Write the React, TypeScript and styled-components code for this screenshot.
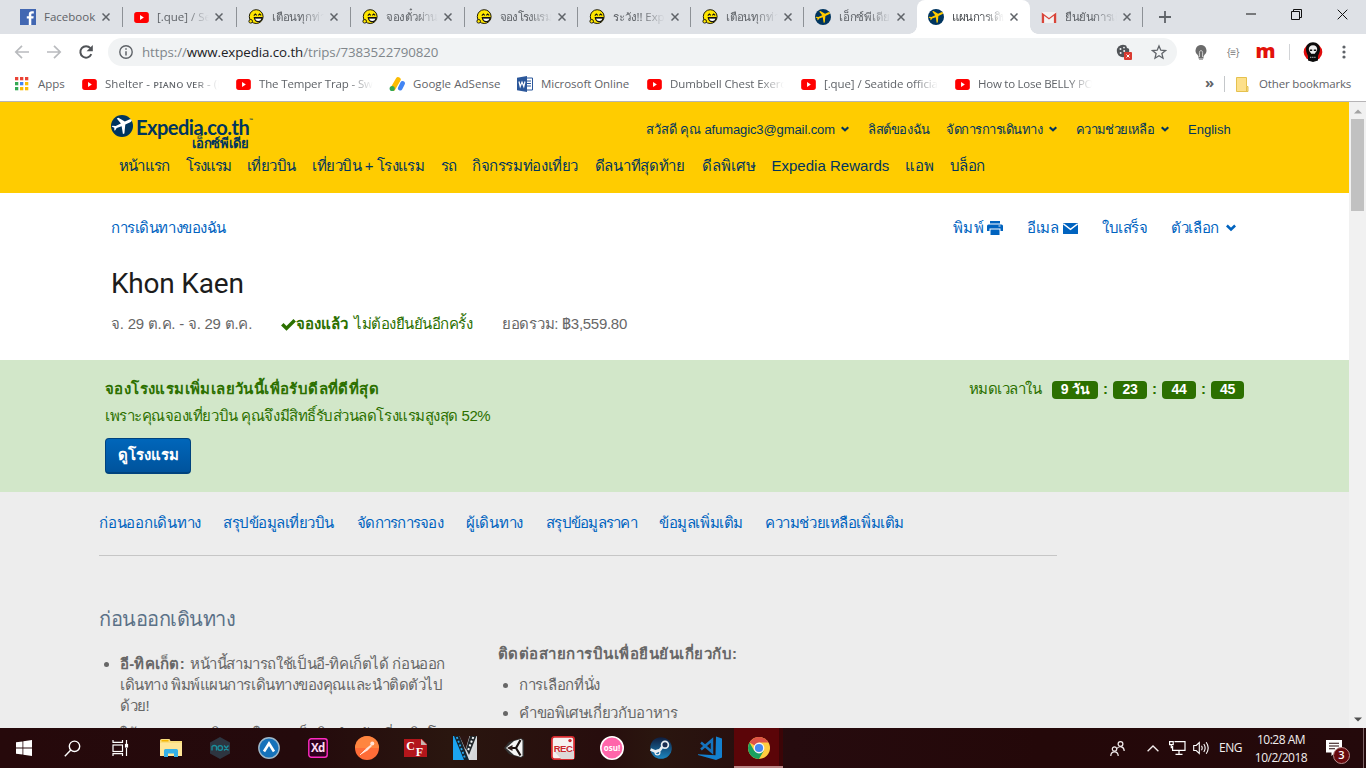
import React from "react";
import styled, { createGlobalStyle, css } from "styled-components";

const ui = `"Open Sans", "Noto Sans", sans-serif`;
const site = `"Liberation Sans", Arial, sans-serif`;

const GlobalStyle = createGlobalStyle`
  * { box-sizing: border-box; }
  body { margin: 0; background: #fff; font-family: ${site}; overflow: hidden; }
  ul { margin: 0; padding: 0; list-style: none; }
  h1, h2, h3, p { margin: 0; font-weight: 400; }
  svg { display: block; flex: none; }
`;

const Screen = styled.div`
  width: 1366px; height: 768px; display: flex; flex-direction: column; overflow: hidden; background: #fff;
`;

/* ---------- browser chrome ---------- */
const TabStrip = styled.div`
  height: 34px; flex: none; display: flex; padding-left: 9px; background: #dee1e6; font: 11.5px/34px ${ui}; color: #5f6368;
`;
const TabItem = styled.div<{ $w: number; $active?: boolean; $sep?: boolean }>`
  position: relative; width: ${p => p.$w}px; flex: none; height: 34px; display: flex; align-items: center; padding-left: 11px;
  ${p => p.$sep && css`&::before { content: ""; position: absolute; right: 0; top: 7px; width: 1px; height: 20px; background: #8d9196; }`}
  ${p => p.$active && css`
    background: #fff; border-radius: 8px 8px 0 0; color: #45494d;
    &::before, &::after { content: ""; position: absolute; bottom: 0; width: 8px; height: 8px; }
    &::before { left: -8px; background: radial-gradient(circle at 0 0, transparent 7.5px, #fff 8px); }
    &::after { right: -8px; background: radial-gradient(circle at 100% 0, transparent 7.5px, #fff 8px); }
  `}
`;
const TabTitle = styled.span<{ $fade?: boolean; $ls?: number }>`
  width: 52px; margin: 0 6px 0 8px; height: 34px; white-space: nowrap; overflow: hidden; letter-spacing: ${p => p.$ls || 0}px;
  ${p => p.$fade && css`mask-image: linear-gradient(90deg, #000 55%, transparent 100%);`}
`;
const NewTab = styled.div`width: 44px; display: flex; align-items: center; justify-content: center;`;
const WindowControls = styled.div`
  margin-left: auto; height: 28px; display: flex; align-items: center; gap: 35px; padding-right: 18px;
`;
const Toolbar = styled.div`
  height: 36px; flex: none; display: flex; align-items: center; padding-left: 14px; background: #fff;
`;
const NavButtons = styled.div`width: 94px; flex: none; display: flex; gap: 16px;`;
const Omnibox = styled.div`
  width: 1069px; flex: none; height: 28px; border-radius: 14px; background: #f1f3f4; display: flex; align-items: center; padding: 0 10px 0 11px;
`;
const Url = styled.span`
  margin-left: 9px; flex: 1; font: 13.3px/28px ${ui}; letter-spacing: -0.07px; color: #80868b; white-space: nowrap;
  b { font-weight: 400; color: #202124; }
`;
const OmniIcons = styled.div`display: flex; gap: 19px; align-items: center;`;
const Extensions = styled.div`flex: 1; display: flex; align-items: center; padding-left: 16px;`;
const Slot = styled.div<{ $w: number }>`width: ${p => p.$w}px; flex: none; display: flex; align-items: center; justify-content: center;`;
const Braces = styled.span`font: 10px/12px ${ui}; color: #777; letter-spacing: -0.5px;`;
const ExtM = styled.span`font: 800 20px/20px "Open Sans", sans-serif; color: #e3120b; height: 22px;`;
const VRule = styled.i<{ $h: number; $c: string }>`width: 1px; height: ${p => p.$h}px; background: ${p => p.$c};`;

const BookmarkBar = styled.div`
  height: 31px; flex: none; display: flex; align-items: center; padding: 0 0 3px 15px; background: #fff; font: 11.5px/28px ${ui}; color: #5f6368;
`;
const Bookmark = styled.div<{ $w: number }>`width: ${p => p.$w}px; flex: none; display: flex; align-items: center;`;
const BookmarkText = styled.span<{ $ml: number; $ls?: number; $fade?: boolean }>`
  margin-left: ${p => p.$ml}px; height: 28px; white-space: nowrap; letter-spacing: ${p => p.$ls || 0}px;
  ${p => p.$fade && css`width: 114px; overflow: hidden; mask-image: linear-gradient(90deg, #000 78%, transparent 100%);`}
`;
const More = styled.span`width: 13px; margin-left: auto; font: 700 15px/24px ${ui}; height: 28px;`;

/* ---------- page ---------- */
const Viewport = styled.div`height: 627px; flex: none; display: flex; border-top: 1px solid #b6b4b6;`;
const Page = styled.div`width: 1349px; height: 626px; display: flex; flex-direction: column; overflow: hidden; background: #ededed;`;
const Scrollbar = styled.div`
  width: 17px; height: 626px; background: #f1f1f1; display: flex; flex-direction: column; align-items: center; justify-content: space-between; padding: 7px 0 6px;
`;
const Thumb = styled.div`width: 13px; height: 92px; background: #c1c1c1; margin: 5px 0 auto;`;

const Txt = styled.span<{ $w?: number; $ls?: number }>`
  ${p => p.$w && css`width: ${p.$w}px;`} flex: none; white-space: nowrap; letter-spacing: ${p => p.$ls || 0}px;
`;

const SiteHeader = styled.header`height: 91px; flex: none; background: #fc0; color: #00355f; padding-left: 111px;`;
const HeaderTop = styled.div`height: 46px; display: flex;`;
const Logo = styled.div`width: 535px; display: flex; padding-top: 13px; height: 50px;`;
const LogoWords = styled.div`margin-left: 3px; width: 115px;`;
const LogoName = styled.div`
  font: 700 20px/24px "Lato", sans-serif; letter-spacing: -0.5px; white-space: nowrap; height: 20px; display: flex;
  sup { font-size: 5px; line-height: 10px; }
`;
const LogoThai = styled.div`font: 700 13px/16px ${site}; text-align: right; letter-spacing: -0.1px; padding-right: 2px; margin-top: 1px;`;
const Utility = styled.nav`display: flex; height: 30px; margin-top: 12px; font-size: 13px; line-height: 31px;`;
const UtilityItem = styled.div<{ $w: number }>`width: ${p => p.$w}px; display: flex; align-items: center; gap: 6px;`;
const MainNav = styled.nav`display: flex; padding-left: 8px; gap: 16.8px; font-size: 15px; line-height: 36px;`;

const TripHead = styled.section`height: 167px; flex: none; background: #fff; padding: 20px 0 0 111px;`;
const TripTools = styled.div`height: 30px; display: flex; align-items: center; color: #0063bf; font-size: 15px; line-height: 30px;`;
const ToolGroup = styled.div<{ $w: number }>`width: ${p => p.$w}px; display: flex; align-items: center;`;
const Title = styled.h1`margin-top: 23px; font: 400 28px/36px "Roboto", sans-serif; letter-spacing: -0.2px; color: #1c1c1c; height: 36px;`;
const Summary = styled.div`height: 30px; margin-top: 7px; display: flex; align-items: center; font-size: 15px; line-height: 30px; color: #676767;`;
const Confirmed = styled.div`display: flex; align-items: center; color: #2c7000; width: 221px; b { margin-right: 6px; width: 52px; }`;

const Deal = styled.section`height: 132px; flex: none; background: #d2e7c9; padding: 15px 105px 0; color: #2c7000; display: flex; justify-content: space-between; font-size: 15px; line-height: 27px;`;
const DealCopy = styled.div`display: flex; flex-direction: column; align-items: flex-start;`;
const DealTitle = styled.h3`font-size: 15px; font-weight: 700; letter-spacing: 0.4px; white-space: nowrap;`;
const DealButton = styled.button`
  margin: 9px 0 0; width: 86px; height: 36px; padding: 0 0 2px; border: 1px solid #00437e; border-bottom-width: 2px; border-radius: 4px;
  background: linear-gradient(#0066ba, #00539c); color: #fff; font: 700 15px/30px ${site}; white-space: nowrap;
`;
const Countdown = styled.div`display: flex; height: 26px; align-items: center; color: #2c7000;`;
const Digits = styled.span<{ $w: number }>`
  width: ${p => p.$w}px; height: 18px; margin-top: 4px; border-radius: 4px; background: #2c7000; color: #fff; font: 700 14px/17px ${site}; text-align: center; letter-spacing: -0.3px;
`;
const Colon = styled.b`width: 15px; text-align: center;`;

const Details = styled.section`flex: 1; padding-left: 99px; color: #676767; font-size: 15px;`;
const SectionTabs = styled.nav`width: 958px; height: 64px; display: flex; gap: 22px; padding-top: 16px; border-bottom: 1px solid #c6c6c6; color: #0063bf; line-height: 30px;`;
const SectionTitle = styled.h2`margin-top: 48px; font-size: 20px; line-height: 30px; height: 30px; letter-spacing: -0.5px; color: #5b7187;`;
const Columns = styled.div`display: flex;`;
const LeftColumn = styled.ul`width: 399px; padding-top: 19px; line-height: 21px;`;
const RightColumn = styled.div`padding-top: 9px; line-height: 21px;`;
const RightTitle = styled.h3`font-size: 15px; font-weight: 700; letter-spacing: 0.48px; white-space: nowrap; margin-bottom: 10px;`;
const Bullet = styled.li`
  display: flex; margin-bottom: 7px;
  &::before { content: ""; width: 5px; height: 5px; border-radius: 50%; background: #676767; margin: 9px 11px 0 5px; flex: none; }
`;
const Lines = styled.div`display: flex; flex-direction: column; white-space: nowrap; b { letter-spacing: 0.25px; margin-right: 5px; }`;

/* ---------- taskbar ---------- */
const TaskbarRoot = styled.footer`
  height: 40px; flex: none; display: flex; align-items: stretch; color: #f2eeee; font: 12px/18px ${ui};
  background: linear-gradient(90deg, #26090b, #240a0c 22%, #2a160f 33%, #270d0d 44%, #2a160f 48%, #260b0e 58%, #240809 76%, #24090b);
`;
const SystemSlots = styled.div`width: 146px; flex: none; display: flex;`;
const AppSlot = styled.div<{ $active?: boolean }>`
  width: 49px; flex: none; display: flex; align-items: center; justify-content: center;
  ${p => p.$active && css`background: linear-gradient(90deg, #5b0508 92%, #3c0507 92%); border-bottom: 2px solid #b98484; padding-top: 2px;`}
`;
const SystemSlot = styled.div`width: 48px; flex: none; display: flex; align-items: center; justify-content: center;`;
const Tray = styled.div`margin-left: auto; display: flex; align-items: center;`;
const Lang = styled.span`width: 34px; letter-spacing: -0.5px;`;
const Clock = styled.div`width: 56px; text-align: center; letter-spacing: -0.5px; line-height: 18px; white-space: nowrap; padding-top: 1px;`;
const Notif = styled.div`position: relative; width: 52px; height: 40px; display: flex; align-items: center; justify-content: center; padding-right: 3px;`;
const Badge = styled.span`
  position: absolute; left: 24px; top: 19px; width: 17px; height: 17px; border: 1px solid #b98e8e; border-radius: 50%; background: #680a0e;
  font: 600 11px/14px ${ui}; text-align: center; color: #fff;
`;

/* ---------- icons ---------- */
const Smiley = () => (
  <svg width="16" height="16" viewBox="0 0 16 16">
    <circle cx="8.200" cy="7.600" r="6.900" fill="#ffe600" stroke="#1d1a05" strokeWidth="1" />
    <path d="M5.800 6.600l1.500-1.500 1.500 1.300M10.300 6.400l1.400-1.300 1.500 1.300" stroke="#111" strokeWidth="1.100" fill="none" />
    <path d="M6.300 8.600h7.900c-.4 2.600-1.900 4-3.900 4S6.700 11.200 6.300 8.600z" fill="#fff" stroke="#111" strokeWidth="1.100" />
    <path d="M6.500 9h7.600" stroke="#111" />
    <circle cx="2.700" cy="12.300" r="1.800" fill="#ffe600" stroke="#111" strokeWidth=".9" />
  </svg>
);
const PlaneDisc = ({ size, disc, plane }: { size: number; disc: string; plane: string }) => (
  <svg width={size} height={size} viewBox="0 0 24 24">
    <circle cx="12" cy="12" r="12" fill={disc} />
    <path fill={plane} d="M22.500 5.500c.4 1-.5 1.800-1.500 2.300l-5.400 2.600-1 9.700-1.600.6-1.400-8.500-5.400 1.900-1.500 2.500-1.100.2V14L.7 12.600l.9-.8 3.500.2 5.700-2.600-4.500-5.600 1.800-.7 7 4 4.900-2.200c1-.4 2.200-.2 2.500.6z" />
  </svg>
);
const YouTube = () => (
  <svg width="15" height="11" viewBox="0 0 20 15"><rect width="20" height="15" rx="3.600" fill="#f00" /><path d="M8 4.200l5.200 3.300L8 10.800z" fill="#fff" /></svg>
);
const FacebookIcon = () => (
  <svg width="16" height="16" viewBox="0 0 16 16"><rect width="16" height="16" fill="#4267b2" /><path d="M13.800 4.500h-1.300c-.9 0-1.200.5-1.200 1.300V7.300h2.400l-.3 2.300h-2.100V16H8.800V9.600H6.800V7.300h2V5.400C8.800 3.300 10 2.200 12 2.200l1.800.1z" fill="#fff" /></svg>
);
const GmailIcon = () => (
  <svg width="16" height="16" viewBox="0 0 16 16"><path d="M1 3h14v11H1z" fill="#f2f2f2" /><path d="M.8 14V3.400L8 9l7.200-5.600V14h-2.300V6.700L8 10.400 3.100 6.700V14z" fill="#d9453a" /></svg>
);
const Cross = ({ s = 8, c = "#5f6368", w = 1.5 }: { s?: number; c?: string; w?: number }) => (
  <svg width={s} height={s} viewBox="0 0 8 8"><path d="M.5.500l7 7M7.500.500l-7 7" stroke={c} strokeWidth={w * 8 / s} /></svg>
);
const Arrow = ({ flip }: { flip?: boolean }) => (
  <svg width="16" height="16" viewBox="0 0 16 16"><path transform={flip ? "matrix(-1 0 0 1 16 0)" : undefined} d="M15 8H2M8 1.800L1.800 8 8 14.200" fill="none" stroke="#b9bbbe" strokeWidth="1.700" /></svg>
);
const Reload = () => (
  <svg width="16" height="16" viewBox="0 0 16 16"><path d="M13.300 10.200A5.700 5.700 0 1 1 12.400 4.200" fill="none" stroke="#505357" strokeWidth="2" /><path d="M14.800 1v6.200H8.600z" fill="#505357" /></svg>
);
const Info = () => (
  <svg width="14" height="14" viewBox="0 0 14 14"><circle cx="7" cy="7" r="6.200" fill="none" stroke="#5f6368" strokeWidth="1.400" /><path d="M7 6.200v4.300M7 3.300v1.500" stroke="#5f6368" strokeWidth="1.500" /></svg>
);
const Cookie = () => (
  <svg width="16" height="16" viewBox="0 0 16 16"><circle cx="7" cy="7" r="6.200" fill="#505357" /><g fill="#f1f3f4"><circle cx="4.500" cy="5" r="1" /><circle cx="8" cy="3.600" r=".9" /><circle cx="4.600" cy="9" r="1" /><circle cx="8.200" cy="7" r="1" /><circle cx="12.500" cy="2.600" r="2" /></g><rect x="8" y="8" width="8" height="8" rx="1" fill="#d93a30" /><path d="M10.500 10.500l3 3m0-3l-3 3" stroke="#fff" /></svg>
);
const Star = () => (
  <svg width="16" height="16" viewBox="0 0 16 16"><path d="M8 1.900l1.800 4.300 4.700.4-3.600 3 1.100 4.600L8 11.800l-4 2.400 1.100-4.600-3.600-3 4.700-.4z" fill="none" stroke="#5f6368" strokeWidth="1.300" /></svg>
);
const Bulb = () => (
  <svg width="14" height="16" viewBox="0 0 14 16"><path d="M7 1a5.500 5.500 0 0 0-3.500 9.700L4.500 12.500V14.500h5v-2l1-1.800A5.500 5.500 0 0 0 7 1z" fill="#6b6b6b" /><path d="M5.400 13V8.500c0-2.500 3.200-2.500 3.200 0V13" stroke="#ddd" fill="none" strokeWidth=".9" /><path d="M5 15.200h4" stroke="#888" /></svg>
);
const Avatar = () => (
  <svg width="20" height="20" viewBox="0 0 20 20"><ellipse cx="10" cy="10" rx="9.300" ry="9" fill="#e00b0b" /><path d="M10 .3C5.500.300 3 3.300 3 7.300c0 3.200 1.500 5 2 6.700v4.600L10 20l5-1.400V14c.5-1.700 2-3.500 2-6.700C17 3.300 14.500.300 10 .3z" fill="#0b0b0b" /><path d="M10 3.200c-2.800 0-4.200 1.700-4.200 4 0 2.600 1.900 2.800 2.400 4.600h3.600c.5-1.800 2.400-2 2.400-4.600 0-2.300-1.400-4-4.200-4z" fill="#eee" /><path d="M6.800 7.500h2.400v1.600H6.800zM10.800 7.500h2.400v1.600h-2.400zM9.400 10h1.200" fill="#111" /><path d="M7 15.300h6" stroke="#bbb" strokeDasharray="1.400 .7" /></svg>
);
const Dots = () => <svg width="4" height="14" viewBox="0 0 4 14" fill="#5f6368"><circle cx="2" cy="2" r="1.600" /><circle cx="2" cy="7" r="1.600" /><circle cx="2" cy="12" r="1.600" /></svg>;
const AppsGrid = () => (
  <svg width="14" height="14" viewBox="0 0 14 14">
    {["#ea4335", "#ea4335", "#ea4335", "#34a853", "#4285f4", "#fbbc05", "#34a853", "#fbbc05", "#fbbc05"].map((c, i) => (
      <rect key={i} x={(i % 3) * 5} y={Math.floor(i / 3) * 5} width="3.300" height="3.300" fill={c} />
    ))}
  </svg>
);
const AdSense = () => (
  <svg width="16" height="16" viewBox="0 0 16 16"><path d="M9.200 3.600L4 12.400" stroke="#fbbc04" strokeWidth="5" strokeLinecap="round" /><circle cx="3.200" cy="12.500" r="2.600" fill="#34a853" /><path d="M13.600 7.400l-2.400 4.800" stroke="#4285f4" strokeWidth="4.600" strokeLinecap="round" /></svg>
);
const Word = () => (
  <svg width="16" height="16" viewBox="0 0 16 16"><path d="M9 2h6.500v12H9z" fill="#fff" stroke="#2b579a" /><path d="M10 5h4M10 7.500h4M10 10h4" stroke="#2b579a" /><path d="M0 1.800L10 0v16L0 14.200z" fill="#2b579a" /><path d="M2 5.500l1.200 5L5 6l1.800 4.500L8 5.500" fill="none" stroke="#fff" strokeWidth="1.200" /></svg>
);
const Folder = () => (
  <svg width="13" height="15" viewBox="0 0 13 15"><path d="M.5.500h10v9h1.500v5H.500z" fill="#fde08a" stroke="#e5c14e" /><path d="M10.500 9.500v5" stroke="#e5c14e" /></svg>
);
const Chevron = ({ s = 8 }: { s?: number }) => (
  <svg width={s} height={s * 0.75} viewBox="0 0 8 6"><path d="M.7 1.200L4 4.300l3.300-3.100" fill="none" stroke="currentColor" strokeWidth="2.100" /></svg>
);
const Printer = () => (
  <svg width="16" height="14" viewBox="0 0 16 14" fill="currentColor"><path d="M3 0h10v2.500H3zM1.500 3.500h13A1.500 1.500 0 0 1 16 5v5h-2.500V7.500h-11V10H0V5a1.500 1.500 0 0 1 1.500-1.500zM3.500 8.500h9V14h-9z" /><path d="M11.500 5h2" stroke="#fff" strokeWidth=".9" /></svg>
);
const Mail = () => (
  <svg width="15" height="11" viewBox="0 0 15 11"><rect width="15" height="11" rx=".6" fill="currentColor" /><path d="M.3.800L7.500 6.300 14.700.800" fill="none" stroke="#fff" strokeWidth="1.400" /></svg>
);
const Check = () => <svg width="15" height="13" viewBox="0 0 15 13"><path d="M1.300 6.200l4.200 4.200L13.700 2.200" fill="none" stroke="currentColor" strokeWidth="3.500" /></svg>;
const Triangle = ({ down }: { down?: boolean }) => (
  <svg width="8" height="5" viewBox="0 0 8 5"><path d={down ? "M0 .5h8L4 4.500z" : "M0 4.500h8L4 .5z"} fill={down ? "#505050" : "#a3a3a3"} /></svg>
);

const WinLogo = () => <svg width="16" height="16" viewBox="0 0 16 16" fill="#fff"><path d="M0 2.300L6.500 1.400v6.200H0zM7.300 1.300L16 0v7.600H7.300zM0 8.400h6.500v6.200L0 13.700zM7.300 8.400H16V16l-8.700-1.300z" /></svg>;
const SearchIcon = () => <svg width="17" height="17" viewBox="0 0 17 17" fill="none" stroke="#fff" strokeWidth="1.400"><circle cx="10.500" cy="6.300" r="5.200" /><path d="M6.800 10L.8 16.200" /></svg>;
const TaskView = () => <svg width="17" height="16" viewBox="0 0 17 16" fill="none" stroke="#fff" strokeWidth="1.200"><rect x="1" y="5" width="9.500" height="6.500" /><path d="M1 0v2.300h9.500V0M1 16v-2.300h9.500V16M14.500 0v4M14.500 8v8" /><rect x="13.500" y="4.500" width="2" height="2.500" fill="#fff" /></svg>;
const Explorer = () => <svg width="22" height="18" viewBox="0 0 22 18"><path d="M0 1.500Q0 0 1.500 0h8l1 2H22v15H0z" fill="#fadd7c" /><path d="M1.500 1h7v1.500h-7z" fill="#f5b400" /><path d="M0 4h22v13H0z" fill="#ffe697" /><path d="M4 18v-6.500Q4 10 5.500 10h11q1.500 0 1.500 1.500V18h-4v-3.500H8V18z" fill="#35b1e8" /></svg>;
const Nox = () => <svg width="20" height="22" viewBox="0 0 20 22"><path d="M10 0l10 5.500v11L10 22 0 16.500v-11z" fill="#2d3540" /><path d="M2 13.500V9.500Q4.500 7.500 6.500 9.500v4M14 8.500l4.500 5M18.500 8.500l-4.500 5" fill="none" stroke="#1b8f9c" strokeWidth="1.300" /><circle cx="10.200" cy="11" r="2.300" fill="none" stroke="#1b8f9c" strokeWidth="1.300" /></svg>;
const BlueArrow = () => <svg width="22" height="22" viewBox="0 0 22 22"><circle cx="11" cy="11" r="10.200" fill="#1672ba" stroke="#9fb8c9" strokeWidth="1.400" /><path d="M6 14.500l5-8 5 8" fill="none" stroke="#fff" strokeWidth="2.600" /></svg>;
const IconText = styled.text<{ $f?: string }>`font-family: ${p => p.$f || `"Open Sans", sans-serif`}; font-weight: 700; text-anchor: middle;`;
const Xd = () => <svg width="20" height="20" viewBox="0 0 20 20"><rect x=".8" y=".8" width="18.400" height="18.400" rx="2.500" fill="#2e001e" stroke="#ff2bc2" strokeWidth="1.400" /><IconText x="9.800" y="14" fontSize="11.500" letterSpacing="-.8" fill="#ffd9f2">Xd</IconText></svg>;
const Postman = () => <svg width="24" height="24" viewBox="0 0 24 24"><circle cx="12" cy="12" r="12" fill="#ff6c37" /><path d="M0 12a12 12 0 0 1 24 0z" fill="#ff9043" opacity=".7" /><path d="M6 18.500l5-6 5-4 1 1.500-4.500 4.500z" fill="#ffe3d6" /><circle cx="17.300" cy="7.500" r="2" fill="#ffe3d6" /><path d="M5 19l5-5" stroke="#ffe3d6" /></svg>;
const Cf = () => <svg width="23" height="18" viewBox="0 0 23 18"><path d="M0 0h18l5 5v13H0z" fill="#b3161b" /><path d="M17 0l6 6h-6z" fill="#c9b7b0" /><IconText $f={`"Liberation Serif", serif`} x="6.500" y="11" fontSize="12" fill="#fff">C</IconText><IconText $f={`"Liberation Serif", serif`} x="15.500" y="17" fontSize="12" fill="#fff">F</IconText></svg>;
const Vegas = () => <svg width="24" height="24" viewBox="0 0 24 24"><path d="M0 0h24v24H0z" fill="#d4d6d8" /><path d="M0 0h4l11 24H0z" fill="#1ca4f0" /><path d="M19 0h5v6l-7 18h-6z" fill="#d9dcde" /><path d="M1 0h5.500L16 24h-5z" fill="#14242e" /><path d="M6.500 0h10L12.500 13.500z" fill="#2b1512" /><path d="M17 0h6.500l-7.500 19-3-6z" fill="#20262a" /><path d="M3.800 1l8.500 22" stroke="#2ba7ec" strokeWidth="1.800" strokeDasharray="2 2" /><path d="M20.300 1l-5.500 14" stroke="#f2f5f6" strokeWidth="2" strokeDasharray="2 2" /></svg>;
const Unity = () => <svg width="20" height="22" viewBox="0 0 20 22"><path d="M0 11L5 5l12-4 3 2v16l-3 2-12-4z" fill="#333" /><path d="M2 11l8-7 7-2 1.500 1.500V18.500L17 20l-7-2z" fill="#f5f5f5" /><path d="M5.500 11H12l4.500 7.500M12 11l4.500-8" stroke="#1b1210" strokeWidth="2.200" fill="none" /><path d="M3 11l5.500-3v6z" fill="#2a1a17" /></svg>;
const Rec = () => <svg width="24" height="24" viewBox="0 0 24 24"><rect x=".9" y=".9" width="22.200" height="22.200" rx="2.500" fill="#f6f1f0" stroke="#d62b2f" strokeWidth="1.800" /><path d="M4 16l6 7h13v-8z" fill="#ddd8d7" /><circle cx="19" cy="4.600" r="1.700" fill="#c9252b" /><IconText $f={`"Liberation Sans", sans-serif`} x="12" y="15.500" fontSize="9.500" fill="#c9252b" letterSpacing="-.5">REC</IconText></svg>;
const Osu = () => <svg width="24" height="24" viewBox="0 0 24 24"><circle cx="12" cy="12" r="11.200" fill="#ff66aa" stroke="#fff" strokeWidth="1.600" /><IconText x="12" y="14.500" fontSize="8" fill="#fff">osu!</IconText></svg>;
const Steam = () => <svg width="22" height="22" viewBox="0 0 22 22"><defs><linearGradient id="st" x2="0" y2="1"><stop stopColor="#101d3d" /><stop offset="1" stopColor="#1b86c0" /></linearGradient></defs><circle cx="11" cy="11" r="10.800" fill="url(#st)" /><path d="M.5 12.500l5.500 2.300 4-1.800 3-4.300" stroke="#e9eef2" strokeWidth="2.800" fill="none" /><circle cx="7.500" cy="15.500" r="2.400" fill="none" stroke="#e9eef2" strokeWidth="1.300" /><circle cx="15" cy="7.700" r="3.400" fill="#1a2d50" stroke="#e9eef2" strokeWidth="1.700" /></svg>;
const VsCode = () => <svg width="24" height="24" viewBox="0 0 24 24"><path d="M18 .5L24 2.500v19L18 24 0 19v-.8l17.500 1z" fill="#1380cf" /><path d="M3 6.500l11 9.500V4L3 13.500" fill="none" stroke="#1673bd" strokeWidth="2.500" /></svg>;
const Chrome = () => <svg width="22" height="22" viewBox="0 0 22 22"><circle cx="11" cy="11" r="11" fill="#ffcd40" /><path d="M11 11L1.500 5.500A11 11 0 0 1 20.500 5.500H11z" fill="#de5246" /><path d="M1.500 5.500A11 11 0 0 0 11 22l4.800-8.300L6.200 13.700z" fill="#19a15f" /><circle cx="11" cy="11" r="5.400" fill="#f5f5f5" /><circle cx="11" cy="11" r="4.100" fill="#4688f1" /></svg>;
const People = () => <svg width="15" height="15" viewBox="0 0 15 15" fill="none" stroke="#f3eded" strokeWidth="1.200"><circle cx="4.500" cy="8" r="2.200" /><path d="M.8 15c0-5.500 7.400-5.500 7.400 0" /><circle cx="10.500" cy="3" r="2.400" /><path d="M7 7.500c2-2.800 7.200-2.300 7.200 2.500" /></svg>;
const Caret = () => <svg width="12" height="7" viewBox="0 0 12 7"><path d="M.6 6.300L6 1l5.400 5.300" fill="none" stroke="#f3eded" strokeWidth="1.300" /></svg>;
const Network = () => <svg width="17" height="14" viewBox="0 0 17 14" fill="none" stroke="#fff" strokeWidth="1.200"><path d="M5.500.600H16v8.800H3.600V5M10 9.500v3.700M6.500 13.300h7" /><path d="M.6.600h3.600v3H.600zM2.300 3.600v3h1.500" /></svg>;
const Volume = () => <svg width="17" height="14" viewBox="0 0 17 14" fill="none" stroke="#fff" strokeWidth="1.100"><path d="M.7 4.500h2.500L6.300 1.500v11L3.200 9.500H.700zM8.500 4.800q1.400 2.200 0 4.400M10.800 3q2.700 4 0 8M13.200 1.200q4 5.800 0 11.600" /></svg>;
const Note = () => <svg width="16" height="16" viewBox="0 0 16 16"><path d="M0 0h16v12.500H9l-3.500 3.500v-3.500H0z" fill="#fff" /><path d="M3 3.200h10M3 6h10M3 8.800h6" stroke="#26090b" strokeWidth="1.100" /></svg>;

/* ---------- data ---------- */
const navy = "#00355f";
const discIcon = <PlaneDisc size={16} disc={navy} plane="#fc0" />;
const tabs: { t: string; icon: React.ReactNode; w: number; ls?: number; active?: boolean; sep?: boolean }[] = [
  { t: "Facebook", icon: <FacebookIcon />, w: 114, sep: true },
  { t: "[.que] / Seatide", icon: <YouTube />, w: 114, sep: true },
  { t: "เตือนทุกท่าน", icon: <Smiley />, w: 114, sep: true, ls: -0.2 },
  { t: "จองตั๋วผ่านเว็บ", icon: <Smiley />, w: 114, sep: true, ls: -0.3 },
  { t: "จองโรงแรมผ่าน", icon: <Smiley />, w: 113, sep: true, ls: -0.8 },
  { t: "ระวัง!! Expedia", icon: <Smiley />, w: 113, sep: true, ls: -0.1 },
  { t: "เตือนทุกท่าน", icon: <Smiley />, w: 113, sep: true, ls: -0.2 },
  { t: "เอ็กซ์พีเดีย", icon: discIcon, w: 113, ls: -0.2 },
  { t: "แผนการเดินทาง", icon: discIcon, w: 113, active: true, ls: -0.5 },
  { t: "ยืนยันการเดินทาง", icon: <GmailIcon />, w: 113, sep: true, ls: -0.4 },
];
const bookmarks: { t: string; icon: React.ReactNode; w: number; ml: number; ls?: number; fade?: boolean }[] = [
  { t: "Apps", icon: <AppsGrid />, w: 67, ml: 9 },
  { t: "Shelter - ᴘɪᴀɴᴏ ᴠᴇʀ - (Porter", icon: <YouTube />, w: 154, ml: 8, fade: true, ls: 0.05 },
  { t: "The Temper Trap - Sweet", icon: <YouTube />, w: 153, ml: 8, fade: true, ls: -0.15 },
  { t: "Google AdSense", icon: <AdSense />, w: 128, ml: 8, ls: 0.05 },
  { t: "Microsoft Online", icon: <Word />, w: 130, ml: 8, ls: -0.05 },
  { t: "Dumbbell Chest Exercise", icon: <YouTube />, w: 154, ml: 8, fade: true, ls: -0.1 },
  { t: "[.que] / Seatide official", icon: <YouTube />, w: 154, ml: 8, fade: true, ls: -0.1 },
  { t: "How to Lose BELLY POOCH", icon: <YouTube />, w: 150, ml: 8, fade: true, ls: -0.25 },
];
const mainNav: [string, number, number][] = [
  ["หน้าแรก", 50, -0.83], ["โรงแรม", 44, -1], ["เที่ยวบิน", 49, -0.5], ["เที่ยวบิน + โรงแรม", 112, -0.54], ["รถ", 14, -1],
  ["กิจกรรมท่องเที่ยว", 106, -0.38], ["ดีลนาทีสุดท้าย", 90, -0.3], ["ดีลพิเศษ", 53, 0], ["Expedia Rewards", 117, 0.03], ["แอพ", 28, -0.33], ["บล็อก", 35, -0.5],
];
const sectionTabs: [string, number, number][] = [
  ["ก่อนออกเดินทาง", 102, -0.25], ["สรุปข้อมูลเที่ยวบิน", 112, -0.46], ["จัดการการจอง", 87, -0.75], ["ผู้เดินทาง", 58, -0.29],
  ["สรุปข้อมูลราคา", 91, -0.75], ["ข้อมูลเพิ่มเติม", 84, -0.4], ["ความช่วยเหลือเพิ่มเติม", 139, -0.41],
];

export default function App() {
  return (
    <Screen>
      <GlobalStyle />
      <TabStrip>
        {tabs.map((tab, i) => (
          <TabItem key={i} $w={tab.w} $active={tab.active} $sep={tab.sep}>
            {tab.icon}
            <TabTitle $fade={i > 0} $ls={tab.ls}>{tab.t}</TabTitle>
            <Cross />
          </TabItem>
        ))}
        <NewTab><svg width="12" height="12" viewBox="0 0 12 12"><path d="M6 0v12M0 6h12" stroke="#5f6368" strokeWidth="1.800" /></svg></NewTab>
        <WindowControls>
          <svg width="10" height="2" viewBox="0 0 10 2"><path d="M0 1h10" stroke="#111" /></svg>
          <svg width="11" height="11" viewBox="0 0 11 11" fill="none" stroke="#111"><path d="M.5 2.500h8v8h-8zM2.500 2.500v-2h8v8h-2" /></svg>
          <Cross s={11} c="#111" w={1} />
        </WindowControls>
      </TabStrip>
      <Toolbar>
        <NavButtons><Arrow /><Arrow flip /><Reload /></NavButtons>
        <Omnibox>
          <Info />
          <Url>https://<b>www.expedia.co.th</b>/trips/7383522790820</Url>
          <OmniIcons><Cookie /><Star /></OmniIcons>
        </Omnibox>
        <Extensions>
          <Slot $w={16}><Bulb /></Slot>
          <Slot $w={48}><Braces>{"{≡}"}</Braces></Slot>
          <Slot $w={17}><ExtM>m</ExtM></Slot>
          <Slot $w={31}><VRule $h={16} $c="#d2d4d7" /></Slot>
          <Slot $w={15}><Avatar /></Slot>
          <Slot $w={47}><Dots /></Slot>
        </Extensions>
      </Toolbar>
      <BookmarkBar>
        {bookmarks.map((b, i) => (
          <Bookmark key={i} $w={b.w}>{b.icon}<BookmarkText $ml={b.ml} $ls={b.ls} $fade={b.fade}>{b.t}</BookmarkText></Bookmark>
        ))}
        <More>»</More>
        <Slot $w={12}><VRule $h={16} $c="#c4c7ca" /></Slot>
        <Slot $w={25}><Folder /></Slot>
        <Bookmark $w={111}><BookmarkText $ml={4} $ls={-0.15}>Other bookmarks</BookmarkText></Bookmark>
      </BookmarkBar>

      <Viewport>
        <Page>
          <SiteHeader>
            <HeaderTop>
              <Logo>
                <PlaneDisc size={22} disc={navy} plane="#fff" />
                <LogoWords>
                  <LogoName>Expedia.co.th<sup>™</sup></LogoName>
                  <LogoThai>เอ็กซ์พีเดีย</LogoThai>
                </LogoWords>
              </Logo>
              <Utility>
                <UtilityItem $w={222}><Txt $w={189} $ls={-0.1}>สวัสดี คุณ afumagic3@gmail.com</Txt><Chevron /></UtilityItem>
                <UtilityItem $w={78}><Txt $w={62} $ls={-0.38}>ลิสต์ของฉัน</Txt></UtilityItem>
                <UtilityItem $w={130}><Txt $w={97} $ls={-0.5}>จัดการการเดินทาง</Txt><Chevron /></UtilityItem>
                <UtilityItem $w={112}><Txt $w={79} $ls={-0.64}>ความช่วยเหลือ</Txt><Chevron /></UtilityItem>
                <UtilityItem $w={50}><Txt>English</Txt></UtilityItem>
              </Utility>
            </HeaderTop>
            <MainNav>{mainNav.map(([t, w, ls]) => <Txt key={t} $w={w} $ls={ls}>{t}</Txt>)}</MainNav>
          </SiteHeader>

          <TripHead>
            <TripTools>
              <ToolGroup $w={842}><Txt $ls={-0.43}>การเดินทางของฉัน</Txt></ToolGroup>
              <ToolGroup $w={74}><Txt $w={34} $ls={0.3}>พิมพ์</Txt><Printer /></ToolGroup>
              <ToolGroup $w={75}><Txt $w={36} $ls={-0.5}>อีเมล</Txt><Mail /></ToolGroup>
              <ToolGroup $w={69}><Txt $ls={-0.5}>ใบเสร็จ</Txt></ToolGroup>
              <ToolGroup $w={70}><Txt $w={55} $ls={-0.33}>ตัวเลือก</Txt><Chevron s={10} /></ToolGroup>
            </TripTools>
            <Title>Khon Kaen</Title>
            <Summary>
              <Txt $w={170} $ls={-0.23}>จ. 29 ต.ค. - จ. 29 ต.ค.</Txt>
              <Confirmed><Check /><b>จองแล้ว</b><Txt $ls={-0.5}>ไม่ต้องยืนยันอีกครั้ง</Txt></Confirmed>
              <Txt $ls={-0.28}>ยอดรวม: ฿3,559.80</Txt>
            </Summary>
          </TripHead>

          <Deal>
            <DealCopy>
              <DealTitle>จองโรงแรมเพิ่มเลยวันนี้เพื่อรับดีลที่ดีที่สุด</DealTitle>
              <Txt $ls={-0.46}>เพราะคุณจองเที่ยวบิน คุณจึงมีสิทธิ์รับส่วนลดโรงแรมสูงสุด 52%</Txt>
              <DealButton>ดูโรงแรม</DealButton>
            </DealCopy>
            <Countdown>
              <Txt $w={83} $ls={-0.56}>หมดเวลาใน</Txt>
              <Digits $w={46}>9 วัน</Digits><Colon>:</Colon>
              <Digits $w={34}>23</Digits><Colon>:</Colon>
              <Digits $w={34}>44</Digits><Colon>:</Colon>
              <Digits $w={33}>45</Digits>
            </Countdown>
          </Deal>

          <Details>
            <SectionTabs>{sectionTabs.map(([t, w, ls]) => <Txt key={t} $w={w} $ls={ls}>{t}</Txt>)}</SectionTabs>
            <SectionTitle>ก่อนออกเดินทาง</SectionTitle>
            <Columns>
              <LeftColumn>
                <Bullet>
                  <Lines>
                    <Txt $ls={-0.39}><b>อี-ทิคเก็ต:</b>หน้านี้สามารถใช้เป็นอี-ทิคเก็ตได้ ก่อนออก</Txt>
                    <Txt $ls={-0.45}>เดินทาง พิมพ์แผนการเดินทางของคุณและนำติดตัวไป</Txt>
                    <Txt $ls={-0.5}>ด้วย!</Txt>
                  </Lines>
                </Bullet>
                <Bullet><Lines><Txt $ls={-0.4}>ใช้เอกสารการเดินทางในการเช็คอินสำหรับเที่ยวบินโดย</Txt></Lines></Bullet>
              </LeftColumn>
              <RightColumn>
                <RightTitle>ติดต่อสายการบินเพื่อยืนยันเกี่ยวกับ:</RightTitle>
                <ul>
                  <Bullet><Txt $ls={-0.3}>การเลือกที่นั่ง</Txt></Bullet>
                  <Bullet><Txt $ls={-0.36}>คำขอพิเศษเกี่ยวกับอาหาร</Txt></Bullet>
                </ul>
              </RightColumn>
            </Columns>
          </Details>
        </Page>
        <Scrollbar><Triangle /><Thumb /><Triangle down /></Scrollbar>
      </Viewport>

      <TaskbarRoot>
        <SystemSlots>
          <SystemSlot><WinLogo /></SystemSlot>
          <SystemSlot><SearchIcon /></SystemSlot>
          <SystemSlot><TaskView /></SystemSlot>
        </SystemSlots>
        {[Explorer, Nox, BlueArrow, Xd, Postman, Cf, Vegas, Unity, Rec, Osu, Steam, VsCode].map((Icon, i) => <AppSlot key={i}><Icon /></AppSlot>)}
        <AppSlot $active><Chrome /></AppSlot>
        <Tray>
          <Slot $w={36}><People /></Slot>
          <Slot $w={36}><Caret /></Slot>
          <Slot $w={12}><Network /></Slot>
          <Slot $w={36}><Volume /></Slot>
          <Lang>ENG</Lang>
          <Clock>10:28 AM<br />10/2/2018</Clock>
          <Notif><Note /><Badge>3</Badge></Notif>
          <Slot $w={5}><VRule $h={40} $c="#7d6466" /></Slot>
        </Tray>
      </TaskbarRoot>
    </Screen>
  );
}
